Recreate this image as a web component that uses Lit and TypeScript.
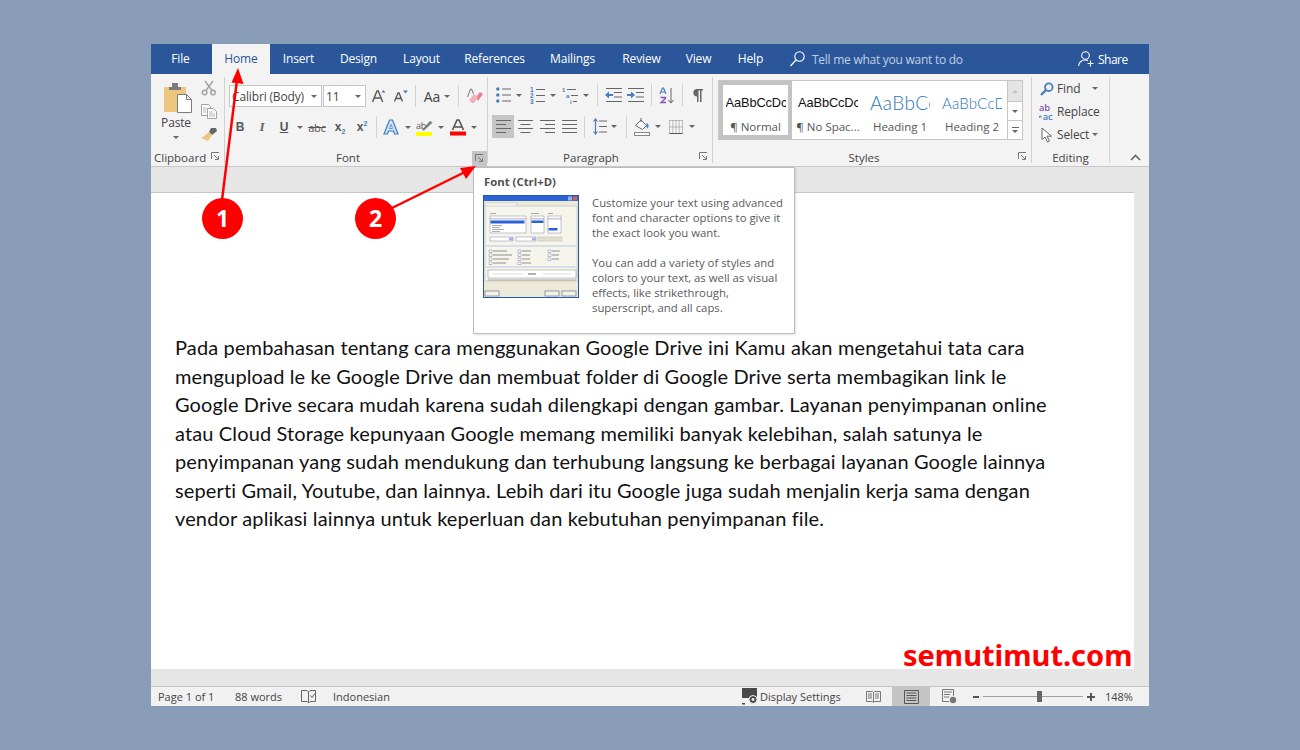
import { LitElement, html, css } from "lit";
import { customElement } from "lit/decorators.js";

const ib = "#4a7ebb";

const dd = html`<span class="dd"></span>`;
const launcher = html`<svg width="9" height="9" viewBox="0 0 9 9"><path d="M.5 7V.5H8M3 3l4 4M4 7.500h3.500V4" fill="none" stroke="#777" stroke-width="1"/></svg>`;

const icons = {
  paste: html`<svg width="30" height="31" viewBox="0 0 30 31"><rect x="1" y="5" width="22" height="25" fill="#edc77f"/><path d="M6 5h12v3H6zM9 1h6v4H9z" fill="#7b7b7b"/><path d="M14.500 12.500h9l5 5v13h-14z" fill="#fff" stroke="#7b7b7b"/><path d="M23.500 12.500v5h5" fill="none" stroke="#7b7b7b"/></svg>`,
  cut: html`<svg width="16" height="16" viewBox="0 0 16 16" fill="none" stroke="#a3a3a3" stroke-width="1.400"><circle cx="3.600" cy="12.500" r="2.300"/><circle cx="12" cy="12.500" r="2.300"/><path d="M5 10.500 12 1M11 10.500 4 1"/></svg>`,
  copy: html`<svg width="16" height="15" viewBox="0 0 16 15" fill="#fff" stroke="#a3a3a3"><path d="M.5.500h7l2 2v9h-9z"/><path d="M6.500 4.500h6l3 3v7h-9z"/><path d="M2 4h4M2 6h3M2 8h3M8 8h4M8 10h6M8 12h6" stroke-width=".8"/></svg>`,
  painter: html`<svg width="18" height="15" viewBox="0 0 18 15"><path d="M11 1l5 0 1 3-5 4-3-3z" fill="#666"/><path d="M9 5l3 3-4 6-7-3 3-2z" fill="#edc77f"/></svg>`,
  grow: html`<svg width="14" height="14" viewBox="0 0 14 14"><path d="M.5 13 5 2h1.200l4.500 11M2.500 9h6" fill="none" stroke="#555" stroke-width="1.400"/><path d="M9.500 3.500 11.500 1l2 2.500z" fill="${ib}"/></svg>`,
  shrink: html`<svg width="14" height="12" viewBox="0 0 14 12"><path d="M.5 11.500 4 3h1l3.500 8.500M2 8.500h5" fill="none" stroke="#555" stroke-width="1.300"/><path d="M9 .5h5l-2.500 3z" fill="${ib}"/></svg>`,
  clear: html`<svg width="16" height="16" viewBox="0 0 16 16"><path d="M9 9l4-5 3 2-5 7z" fill="#e8808c"/><path d="M5 15l-3-3 5-6 4 3-4 6z" fill="#f2b0b8"/><path d="M.5 9 3.500 1h1l2 5" fill="none" stroke="#777"/></svg>`,
  textfx: html`<svg width="16" height="16" viewBox="0 0 16 16"><path d="M1 15 6.500 1h3L15 15h-3.500l-1-3h-5l-1 3z" fill="#cfe2f5" stroke="#3f7fc1" stroke-width="1.200"/><path d="M6.500 9.500h3L8 5.500z" fill="#fff" stroke="#3f7fc1" stroke-width=".8"/></svg>`,
  highlight: html`<svg width="17" height="17" viewBox="0 0 17 17"><text x="0" y="10" font-size="9" font-family="Open Sans" fill="#555">ab</text><rect x="0" y="13" width="16" height="4" fill="#ffff00"/><path d="M6 11l8-9 2.500 1.500-8.500 8z" fill="#7a7a7a"/></svg>`,
  fcolor: html`<svg width="16" height="17" viewBox="0 0 16 17"><path d="M2.500 11 7 1h2l4.500 10M4.500 8h7" fill="none" stroke="#555" stroke-width="1.600"/><rect y="12.500" width="16" height="4" fill="#f00"/></svg>`,
  bullets: html`<svg width="15" height="16" viewBox="0 0 15 16"><circle cx="1.800" cy="2" r="1.700" fill="${ib}"/><circle cx="1.800" cy="8" r="1.700" fill="${ib}"/><circle cx="1.800" cy="14" r="1.700" fill="${ib}"/><path d="M6 2h9M6 8h9M6 14h9" stroke="#666" stroke-width="1"/></svg>`,
  numbering: html`<svg width="15" height="17" viewBox="0 0 15 17"><g font-size="6.500" font-family="Liberation Sans" font-weight="700" fill="${ib}"><text x="0" y="5">1</text><text x="0" y="11">2</text><text x="0" y="17">3</text></g><path d="M6 2.500h9M6 8.500h9M6 14.500h9" stroke="#666"/></svg>`,
  multi: html`<svg width="17" height="17" viewBox="0 0 17 17"><g font-size="6" font-family="Liberation Sans" font-weight="700" fill="${ib}"><text x="0" y="5">1</text><text x="4" y="11">a</text><text x="8" y="17">i</text></g><path d="M5 2.500h9M9 8.500h7M11 14.500h4" stroke="#666"/></svg>`,
  outdent: html`<svg width="17" height="14" viewBox="0 0 17 14"><path d="M1 .5h16M9 4.500h8M9 9h8M1 13.500h16" stroke="#666"/><path d="M0 7l4-3.500V6h4v2H4v2.500z" fill="${ib}"/></svg>`,
  indent: html`<svg width="17" height="14" viewBox="0 0 17 14"><path d="M1 .5h16M9 4.500h8M9 9h8M1 13.500h16" stroke="#666"/><path d="M8 7 4 3.500V6H0v2h4v2.500z" fill="${ib}"/></svg>`,
  sort: html`<svg width="16" height="17" viewBox="0 0 16 17"><path d="M1 7 3.500 1h1L7 7M2 5h4" fill="none" stroke="${ib}" stroke-width="1.200"/><path d="M1.500 10.500h5v1L2 15.500h5" fill="none" stroke="#8b4fb3" stroke-width="1.300"/><path d="M12 1v15M9.500 13l2.500 3 2.500-3" fill="none" stroke="#666"/></svg>`,
  pilcrow: html`<svg width="11" height="13" viewBox="0 0 11 13"><path d="M4.500 0H11v1.500H9.500V13H8V1.500H6.500V13H5V7.500A4 3.800 0 0 1 4.500 0z" fill="#666"/></svg>`,
  aleft: html`<svg width="15" height="13" viewBox="0 0 15 13"><path d="M0 .5h15M0 4.500h10M0 8.500h15M0 12.500h10" stroke="#666"/></svg>`,
  acenter: html`<svg width="15" height="13" viewBox="0 0 15 13"><path d="M0 .5h15M2.500 4.500h10M0 8.500h15M2.500 12.500h10" stroke="#666"/></svg>`,
  aright: html`<svg width="15" height="13" viewBox="0 0 15 13"><path d="M0 .5h15M5 4.500h10M0 8.500h15M5 12.500h10" stroke="#666"/></svg>`,
  ajust: html`<svg width="15" height="13" viewBox="0 0 15 13"><path d="M0 .5h15M0 4.500h15M0 8.500h15M0 12.500h15" stroke="#666"/></svg>`,
  spacing: html`<svg width="14" height="17" viewBox="0 0 14 17"><path d="M6 3h8M6 8.500h8M6 14h8" stroke="#666"/><path d="M2.500 1v15M.5 3.500l2-2.500 2 2.500M.5 13.500l2 2.500 2-2.500" stroke="${ib}" fill="none" stroke-width="1.200"/></svg>`,
  shade: html`<svg width="17" height="18" viewBox="0 0 17 18"><path d="M1.500 7.500 7 2l5.500 5.500-4 4z" fill="#fff" stroke="#666"/><path d="M7 0v4" stroke="#666"/><path d="M13 5c-1 2-1 5 .5 5S15 6 13 5z" fill="${ib}"/><rect x=".5" y="14.500" width="15" height="3" fill="#fff" stroke="#888"/></svg>`,
  borders: html`<svg width="14" height="14" viewBox="0 0 14 14"><path d="M.5.500h13v13H.5zM7 .5v13M.5 7h13M3.800.5v13M10.200.5v13" fill="none" stroke="#8a8a8a" stroke-dasharray="1 1"/><path d="M.5 13.500h13" stroke="#555"/></svg>`,
  find: html`<svg width="14" height="14" viewBox="0 0 14 14"><circle cx="8.800" cy="5.200" r="3.800" fill="none" stroke="${ib}" stroke-width="1.800"/><path d="M6 8 1 13" stroke="${ib}" stroke-width="2.400"/></svg>`,
  replace: html`<svg width="16" height="18" viewBox="0 0 16 18"><text x="0" y="8" font-size="10" font-weight="600" font-family="Open Sans" fill="#8b4fb3">ab</text><text x="4" y="17" font-size="10" font-weight="600" font-family="Open Sans" fill="${ib}">ac</text><path d="M0 14h3M1.500 12.500 0 14l1.500 1.500" fill="none" stroke="${ib}"/></svg>`,
  select: html`<svg width="12" height="16" viewBox="0 0 12 16"><path d="M1 1v11.500l3-2.500 2.500 5 2-1-2.500-4.800h4.500z" fill="#fff" stroke="#666"/></svg>`,
  search: html`<svg width="15" height="16" viewBox="0 0 15 16"><circle cx="9.500" cy="5.500" r="4.700" fill="none" stroke="#fff" stroke-width="1.100"/><path d="M6 9 .5 15" stroke="#fff" stroke-width="1.200"/></svg>`,
  share: html`<svg width="16" height="16" viewBox="0 0 16 16" fill="none" stroke="#fff" stroke-width="1.100"><circle cx="7.500" cy="4.500" r="3.800"/><path d="M.5 15c.5-3.500 3-6 7-6 1 0 2 .2 2.500.5M12.500 9.500v6M9.500 12.500h6"/></svg>`,
  proof: html`<svg width="15" height="14" viewBox="0 0 15 14" fill="none" stroke="#666"><path d="M.5.500H6L7.500 2 9 .5h5.500v11H9L7.500 13 6 11.500H.5z"/><path d="M7.500 2v11M9.500 5.500l1.500 2 3-4"/></svg>`,
  display: html`<svg width="17" height="17" viewBox="0 0 17 17"><rect x="0" y="0" width="15" height="10" fill="#4a4a4a"/><path d="M0 15h3v1.500H0z" fill="#4a4a4a"/><circle cx="11" cy="11.500" r="4" fill="#4a4a4a" stroke="#f1f1f1"/><circle cx="11" cy="11.500" r="1.400" fill="#f1f1f1"/></svg>`,
  read: html`<svg width="15" height="14" viewBox="0 0 15 14" fill="none" stroke="#777"><path d="M.5 1.500h6l1 1 1-1h6v10h-6l-1 1-1-1h-6zM7.500 2.500v10M2 4h4M2 6h4M2 8h4M9 4h4M9 6h4M9 8h4"/></svg>`,
  print: html`<svg width="15" height="14" viewBox="0 0 15 14" fill="none" stroke="#555"><path d="M.5.500h14v13H.5zM2.500 3h10M2.500 5.500h10M2.500 8h10M2.500 10.500h10"/></svg>`,
  web: html`<svg width="15" height="15" viewBox="0 0 15 15"><path d="M.5.500h11v12H.5zM2 3h8M2 5.500h6M2 8h5" fill="none" stroke="#777"/><circle cx="11" cy="11" r="3.800" fill="#777" stroke="#f1f1f1"/></svg>`,
};

const thumb = html`<svg width="96" height="103" viewBox="0 0 96 103">
  <rect x=".5" y=".5" width="95" height="102" fill="#ece9d8" stroke="#2455b8"/>
  <rect x="1" y="1" width="94" height="5" fill="#2a62d5"/><rect x="85" y="1.500" width="4" height="4" fill="#8fb0ec"/><rect x="90" y="1.500" width="4" height="4" fill="#d9603b"/>
  <rect x="2" y="8" width="32" height="3.500" fill="#f7f6ef" stroke="#aaa" stroke-width=".4"/>
  <rect x="2" y="11" width="92" height="75" fill="#f6f5ec" stroke="#aaa" stroke-width=".5"/>
  <rect x="7" y="21" width="36" height="3" fill="#fff" stroke="#88a" stroke-width=".5"/>
  <rect x="7" y="24" width="36" height="14" fill="#fff" stroke="#88a" stroke-width=".5"/><rect x="7.500" y="25.500" width="34" height="3" fill="#2a62d5"/>
  <path d="M7 18.500h6M48 18.500h8M65 18.500h5M9 30.500h10M9 32.500h8M9 34.500h12M9 36.500h8M50 30h7M50 32h5M50 34h8M67 27h4M67 30h4" stroke="#888" stroke-width=".7"/>
  <rect x="48" y="21" width="13" height="3" fill="#fff" stroke="#88a" stroke-width=".5"/>
  <rect x="48" y="24" width="13" height="14" fill="#fff" stroke="#88a" stroke-width=".5"/><rect x="48.500" y="25.500" width="12" height="2.500" fill="#2a62d5"/>
  <rect x="65" y="21" width="13" height="3" fill="#fff" stroke="#88a" stroke-width=".5"/>
  <rect x="65" y="24" width="13" height="14" fill="#fff" stroke="#88a" stroke-width=".5"/><rect x="65.500" y="33" width="9" height="2.500" fill="#2a62d5"/>
  <rect x="7" y="42" width="23" height="4" fill="#fff" stroke="#88a" stroke-width=".5"/><rect x="26" y="42.500" width="4" height="3" fill="#9db8e8"/>
  <rect x="33" y="42" width="20" height="4" fill="#fff" stroke="#88a" stroke-width=".5"/><rect x="49" y="42.500" width="4" height="3" fill="#9db8e8"/>
  <rect x="55" y="42" width="24" height="4" fill="#e2dfcc" stroke="#bbb" stroke-width=".5"/>
  <path d="M3 51h90" stroke="#8fa8dc" stroke-width=".6"/><path d="M3 72h90" stroke="#8fa8dc" stroke-width=".6"/>
  <path d="M6 55h3v2.500H6zM6 59h3v2.500H6zM6 63h3v2.500H6zM6 67h3v2.500H6zM35 55h3v2.500h-3zM35 59h3v2.500h-3zM35 63h3v2.500h-3zM35 67h3v2.500h-3zM65 55h3v2.500h-3zM65 59h3v2.500h-3zM65 63h3v2.500h-3z" fill="#fff" stroke="#668" stroke-width=".4"/>
  <path d="M10 56h14M10 60h19M10 64h16M10 68h13M39 56h9M39 60h8M39 64h8M39 68h9M69 56h8M69 60h7M69 64h7" stroke="#777" stroke-width=".8"/>
  <rect x="5" y="75" width="88" height="8" fill="#fff" stroke="#888" stroke-width=".5"/><path d="M10 79h30M60 79h28" stroke="#bbb" stroke-width=".5"/><path d="M45 79h8" stroke="#666" stroke-width="1"/>
  <path d="M5 85h88" stroke="#777" stroke-width=".6"/>
  <rect x="2" y="96" width="14" height="5" fill="#f5f3e8" stroke="#567" stroke-width=".6"/><rect x="62" y="96" width="14" height="5" fill="#f5f3e8" stroke="#567" stroke-width=".6"/><rect x="79" y="96" width="14" height="5" fill="#f5f3e8" stroke="#567" stroke-width=".6"/>
</svg>`;

const styleItems = [
  { a: "AaBbCcDc", l: "¶ Normal", c: "s-n" },
  { a: "AaBbCcDc", l: "¶ No Spac...", c: "s-n" },
  { a: "AaBbCc", l: "Heading 1", c: "s-h1" },
  { a: "AaBbCcD", l: "Heading 2", c: "s-h2" },
];

@customElement("app-root")
export class AppRoot extends LitElement {
  static styles = css`
    :host { display: block; width: 1300px; height: 750px; position: relative; overflow: hidden; background: #8a9db8; font-family: "Open Sans", "Noto Sans", sans-serif; }
    .page { padding: 44px 151px 0; box-sizing: border-box; height: 750px; }
    .win { width: 998px; height: 662px; display: flex; flex-direction: column; background: #e6e6e6; }
    .tabs { height: 30px; background: #2b579a; display: flex; align-items: center; color: #fff; font-size: 12px; letter-spacing: -0.15px; flex: none; }
    .tab { height: 30px; line-height: 30px; text-align: center; flex: none; }
    .t-file { width: 59px; margin-right: 2px; } .t-home { width: 58px; background: #f3f3f3; color: #2b579a; } .t-insert { width: 57px; } .t-design { width: 63px; }
    .t-layout { width: 63px; } .t-refs { width: 83px; } .t-mail { width: 73px; } .t-review { width: 65px; } .t-view { width: 49px; } .t-help { width: 55px; margin-right: 12px; }
    .tell { display: flex; align-items: center; gap: 7px; color: #c0cfe6; width: 288px; letter-spacing: -0.26px; }
    .share { display: flex; align-items: center; gap: 4px; letter-spacing: -0.5px; }

    .ribbon { height: 92px; flex: none; background: #f3f3f3; border-bottom: 1px solid #c8c8c8; display: flex; color: #444; font-size: 12px; letter-spacing: -0.15px; }
    .vsep { width: 1px; background: #d2d2d2; margin: 3px 0; flex: none; }
    .grp { flex: none; display: flex; flex-direction: column; position: relative; }
    .body { height: 76px; flex: none; box-sizing: border-box; }
    .lab { height: 16px; line-height: 15px; text-align: center; font-size: 11.500px; letter-spacing: 0; }
    .launch { position: absolute; right: 2px; bottom: 3px; width: 14px; height: 14px; display: flex; align-items: center; justify-content: center; }
    .launch.on { background: #c5c5c5; right: 0; bottom: 0; width: 15px; height: 15px; }
    .dd { display: inline-block; width: 0; height: 0; border: 3px solid transparent; border-top: 3px solid #666; border-bottom: 0; }

    .g-clip { width: 73px; } .g-font { width: 262px; } .g-para { width: 224px; } .g-styles { width: 318px; } .g-edit { width: 77px; } .g-rest { flex: 1; position: relative; }
    .g-font .lab { padding-right: 16px; } .g-para .lab { padding-right: 18px; } .g-styles .lab { padding-right: 16px; }
    .clip-body { display: grid; grid-template-columns: 50px 15px; }
    .paste { display: flex; flex-direction: column; align-items: center; padding-top: 8px; }
    .paste > svg { margin-left: 3px; }
    .paste-t { margin-top: 2px; line-height: 16px; }
    .paste-dd { margin-top: 5px; }
    .minis { display: flex; flex-direction: column; align-items: center; padding-top: 6px; gap: 8px; }
    .clip-lab { text-align: left; padding-left: 3px; }

    .row { display: grid; align-items: center; justify-items: center; }
    .f1 { grid-template-columns: 93px 1px 43px 6px 14px 8px 14px 7px 1px 42px 1px 8px 16px; margin: 11px 0 0 4px; height: 22px; }
    .f2 { grid-template-columns: 22px 22px 22px 10px 24px 22px 22px 3px 1px 3px 22px 11px 22px 12px 22px 10px; margin: 9px 0 0 4px; height: 22px; }
    .combo { width: 100%; height: 22px; box-sizing: border-box; background: #fff; border: 1px solid #c6c6c6; display: flex; align-items: center; justify-content: space-between; padding: 0 4px 0 2px; }
    .isep { width: 1px; height: 22px; background: #d2d2d2; }
    .aa { display: flex; align-items: center; gap: 4px; font-size: 14px; }
    .bold { font-weight: 700; font-family: "Liberation Sans", sans-serif; font-size: 12px; color: #555; }
    .ital { font-style: italic; font-family: "Liberation Serif", serif; font-size: 13px; font-weight: 700; color: #666; }
    .und { text-decoration: underline; }
    .strike { text-decoration: line-through; font-size: 11px; color: #555; }
    sub, sup { font-size: 7px; color: #4a7ebb; line-height: 0; }

    .p1 { grid-template-columns: 16px 16px 20px 12px 22px 10px 6px 1px 5px 20px 2px 20px 6px 1px 5px 20px 5px 1px 28px; margin: 10px 0 0 7px; height: 22px; }
    .p2 { grid-template-columns: 22px 22px 22px 22px 4px 1px 8px 14px 14px 5px 1px 7px 16px 16px 3px 14px 18px; margin: 9px 0 0 4px; height: 23px; }
    .hl { background: #c5c5c5; width: 22px; height: 23px; display: flex; align-items: center; justify-content: center; }

    .gallery { margin: 6px 0 0 5px; width: 305px; height: 60px; box-sizing: border-box; background: #fff; border: 1px solid #c6c6c6; display: flex; }
    .sitem { width: 72px; height: 58px; flex: none; box-sizing: border-box; display: flex; flex-direction: column; align-items: center; padding: 10px 4px 0; overflow: hidden; }
    .sitem.on { border: 4px solid #c3c3c3; width: 73px; padding: 6px 2px 0; }
    .sa { height: 28px; line-height: 24px; white-space: nowrap; overflow: hidden; width: 60px; text-align: left; font-family: "Liberation Sans", sans-serif; letter-spacing: -0.1px; }
    .s-n { font-size: 12.800px; color: #111; }
    .s-h1 { font-size: 19px; color: #2e74b5; font-weight: 300; font-family: "Lato", sans-serif; letter-spacing: 0.4px; }
    .s-h2 { font-size: 15px; color: #2e74b5; font-family: "Lato", sans-serif; font-weight: 300; letter-spacing: 0.2px; }
    .sl { color: #555; white-space: nowrap; line-height: 16px; font-size: 11.500px; letter-spacing: 0; }
    .sitems { display: flex; flex: 1; min-width: 0; }
    .scroll { width: 14px; flex: none; border-left: 1px solid #c6c6c6; display: flex; flex-direction: column; background: #f3f3f3; }
    .scroll div { display: flex; flex-direction: column; gap: 2px; align-items: center; justify-content: center; background: #fff; border-bottom: 1px solid #c6c6c6; }
    .scroll .sc-up { height: 20px; background: #e4e4e4; }
    .sc-dn { height: 18px; }
    .scroll .sc-mo { flex: 1; border-bottom: none; }
    .dash { width: 7px; height: 1px; background: #666; }
    .up { display: inline-block; width: 0; height: 0; border: 3px solid transparent; border-bottom: 3px solid #c2c2c2; border-top: 0; }

    .edit { display: flex; flex-direction: column; padding: 3px 0 0 7px; }
    .eitem { display: flex; align-items: center; height: 23px; gap: 3px; flex: none; }
    .ei { width: 15px; display: flex; justify-content: center; }
    .chev { position: absolute; right: 8px; bottom: 5px; }

    .ruler { height: 25px; flex: none; background: #e6e6e6; }
    .mid { flex: 1; display: flex; min-height: 0; }
    .doc { width: 983px; height: 477px; background: #fff; border-top: 1px solid #c6c6c6; position: relative; padding: 140px 0 0 24px; box-sizing: border-box; flex: none; font-family: "Lato", sans-serif; font-size: 20px; letter-spacing: 0.135px; line-height: 28.500px; color: #111; white-space: nowrap; }
    .gap { height: 17px; flex: none; }
    .status { height: 20px; flex: none; background: #f1f1f1; border-top: 1px solid #c6c6c6; box-sizing: border-box; display: flex; align-items: center; color: #444; font-size: 11px; letter-spacing: 0; padding-left: 7px; }
    .st-page { width: 77px; } .st-words { width: 66px; } .st-proof { width: 32px; display: flex; } .st-lang { width: 409px; }
    .st-disp { display: flex; align-items: center; gap: 1px; width: 124px; }
    .st-read { width: 26px; display: flex; } .st-print { width: 38px; height: 19px; background: #c5c5c5; display: flex; align-items: center; justify-content: center; margin-right: 12px; }
    .st-web { width: 31px; display: flex; }
    .zoom { display: flex; align-items: center; width: 122px; gap: 4px; }
    .zm { width: 6px; height: 2px; background: #555; flex: none; position: relative; }
    .zp { width: 8px; height: 2px; background: #555; flex: none; position: relative; }
    .zp::after { content: ""; position: absolute; left: 3px; top: -3px; width: 2px; height: 8px; background: #555; }
    .track { width: 100px; height: 1px; background: #a0a0a0; position: relative; flex: none; }
    .thumb { position: absolute; left: 54px; top: -5px; width: 5px; height: 11px; background: #666; }
    .pct { margin-left: 6px; }

    .tip { position: absolute; left: 473px; top: 167px; width: 322px; height: 167px; box-sizing: border-box; background: #fff; border: 1px solid #bdbdbd; box-shadow: 1px 1px 2px rgba(0,0,0,.12); padding: 6px 9px; color: #5a5a5a; font-size: 11.350px; }
    .tip-t { font-weight: 700; line-height: 15px; color: #505050; padding-left: 1px; }
    .tip-b { display: flex; gap: 13px; margin-top: 6px; }
    .tip-i { flex: none; height: 103px; }
    .tip-x { line-height: 15px; white-space: nowrap; }
    .tip-x p { margin: 0 0 15px; }
    .mark { position: absolute; left: 903px; top: 633px; color: #f00; font-weight: 700; font-size: 29px; line-height: 44px; font-family: "Noto Sans", sans-serif; }
    .anno { position: absolute; left: 0; top: 0; }
    .bad { position: absolute; top: 198px; width: 41px; height: 41px; border-radius: 50%; background: #f00; color: #fff; font: 700 23px/41px "Open Sans", sans-serif; text-align: center; }
    .b1 { left: 202px; } .b2 { left: 355px; }
  `;

  render() {
    return html`
      <div class="page">
        <div class="win">
          <div class="tabs">
            <div class="tab t-file">File</div><div class="tab t-home">Home</div><div class="tab t-insert">Insert</div><div class="tab t-design">Design</div>
            <div class="tab t-layout">Layout</div><div class="tab t-refs">References</div><div class="tab t-mail">Mailings</div><div class="tab t-review">Review</div><div class="tab t-view">View</div><div class="tab t-help">Help</div>
            <div class="tell">${icons.search}<span>Tell me what you want to do</span></div>
            <div class="share">${icons.share}<span>Share</span></div>
          </div>
          <div class="ribbon">
            <div class="grp g-clip">
              <div class="body clip-body">
                <div class="paste">${icons.paste}<span class="paste-t">Paste</span><span class="dd paste-dd"></span></div>
                <div class="minis">${icons.cut}${icons.copy}${icons.painter}</div>
              </div>
              <div class="lab clip-lab">Clipboard</div>
              <div class="launch">${launcher}</div>
            </div>
            <div class="vsep"></div>
            <div class="grp g-font">
              <div class="body">
                <div class="row f1">
                  <div class="combo"><span>Calibri (Body)</span>${dd}</div><span></span>
                  <div class="combo"><span>11</span>${dd}</div>
                  <span></span>
                  ${icons.grow}<span></span>${icons.shrink}<span></span><div class="isep"></div>
                  <div class="aa"><span>Aa</span>${dd}</div><div class="isep"></div><span></span>${icons.clear}
                </div>
                <div class="row f2">
                  <span class="bold">B</span><span class="ital">I</span><span class="bold und">U</span>${dd}
                  <span class="strike">abc</span><span class="bold">x<sub>2</sub></span><span class="bold">x<sup>2</sup></span>
                  <span></span><div class="isep"></div><span></span>
                  ${icons.textfx}${dd}${icons.highlight}${dd}${icons.fcolor}${dd}
                </div>
              </div>
              <div class="lab">Font</div>
              <div class="launch on">${launcher}</div>
            </div>
            <div class="vsep"></div>
            <div class="grp g-para">
              <div class="body">
                <div class="row p1">
                  ${icons.bullets}${dd}${icons.numbering}${dd}${icons.multi}${dd}<span></span><div class="isep"></div><span></span>
                  ${icons.outdent}<span></span>${icons.indent}<span></span><div class="isep"></div><span></span>
                  ${icons.sort}<span></span><div class="isep"></div>${icons.pilcrow}
                </div>
                <div class="row p2">
                  <div class="hl">${icons.aleft}</div>${icons.acenter}${icons.aright}${icons.ajust}<span></span><div class="isep"></div><span></span>
                  ${icons.spacing}${dd}<span></span><div class="isep"></div><span></span>
                  ${icons.shade}${dd}<span></span>${icons.borders}${dd}
                </div>
              </div>
              <div class="lab">Paragraph</div>
              <div class="launch">${launcher}</div>
            </div>
            <div class="vsep"></div>
            <div class="grp g-styles">
              <div class="body">
                <div class="gallery">
                  <div class="sitems">
                    ${styleItems.map((s, i) => html`<div class="sitem ${i === 0 ? "on" : ""}"><div class="sa ${s.c}">${s.a}</div><div class="sl">${s.l}</div></div>`)}
                  </div>
                  <div class="scroll">
                    <div class="sc-up"><span class="up"></span></div>
                    <div class="sc-dn">${dd}</div>
                    <div class="sc-mo"><span class="dash"></span>${dd}</div>
                  </div>
                </div>
              </div>
              <div class="lab">Styles</div>
              <div class="launch">${launcher}</div>
            </div>
            <div class="vsep"></div>
            <div class="grp g-edit">
              <div class="body edit">
                <div class="eitem"><span class="ei">${icons.find}</span><span>Find</span>&nbsp;&nbsp;${dd}</div>
                <div class="eitem"><span class="ei">${icons.replace}</span><span>Replace</span></div>
                <div class="eitem"><span class="ei">${icons.select}</span><span>Select</span>${dd}</div>
              </div>
              <div class="lab">Editing</div>
            </div>
            <div class="vsep"></div>
            <div class="g-rest">
              <svg class="chev" width="11" height="7" viewBox="0 0 11 7"><path d="M1 6l4.500-4.500L10 6" fill="none" stroke="#666" stroke-width="1.600"/></svg>
            </div>
          </div>
          <div class="ruler"></div>
          <div class="mid">
            <div class="doc">Pada pembahasan tentang cara menggunakan Google Drive ini Kamu akan mengetahui tata cara<br>mengupload le ke Google Drive dan membuat folder di Google Drive serta membagikan link le<br>Google Drive secara mudah karena sudah dilengkapi dengan gambar. Layanan penyimpanan online<br>atau Cloud Storage kepunyaan Google memang memiliki banyak kelebihan, salah satunya le<br>penyimpanan yang sudah mendukung dan terhubung langsung ke berbagai layanan Google lainnya<br>seperti Gmail, Youtube, dan lainnya. Lebih dari itu Google juga sudah menjalin kerja sama dengan<br>vendor aplikasi lainnya untuk keperluan dan kebutuhan penyimpanan file.</div>
          </div>
          <div class="gap"></div>
          <div class="status">
            <span class="st-page">Page 1 of 1</span><span class="st-words">88 words</span><span class="st-proof">${icons.proof}</span><span class="st-lang">Indonesian</span>
            <span class="st-disp">${icons.display}<span>Display Settings</span></span>
            <span class="st-read">${icons.read}</span><span class="st-print">${icons.print}</span><span class="st-web">${icons.web}</span>
            <span class="zoom"><span class="zm"></span><span class="track"><span class="thumb"></span></span><span class="zp"></span><span class="pct">148%</span></span>
          </div>
        </div>
      </div>

      <div class="tip">
        <div class="tip-t">Font (Ctrl+D)</div>
        <div class="tip-b">
          <div class="tip-i">${thumb}</div>
          <div class="tip-x"><p>Customize your text using advanced<br>font and character options to give it<br>the exact look you want.</p><p>You can add a variety of styles and<br>colors to your text, as well as visual<br>effects, like strikethrough,<br>superscript, and all caps.</p></div>
        </div>
      </div>
      <div class="mark">semutimut.com</div>
      <svg class="anno" width="1300" height="750" viewBox="0 0 1300 750">
        <path d="M222 200 237 80" stroke="#f00" stroke-width="2.500"/><path d="M238 68 243.500 84 231.500 82.500z" fill="#f00"/>
        <path d="M392 208 465 172" stroke="#f00" stroke-width="2.500"/><path d="M476 166 466 179 460 168z" fill="#f00"/>
      </svg>
      <div class="bad b1">1</div><div class="bad b2">2</div>
    `;
  }
}
